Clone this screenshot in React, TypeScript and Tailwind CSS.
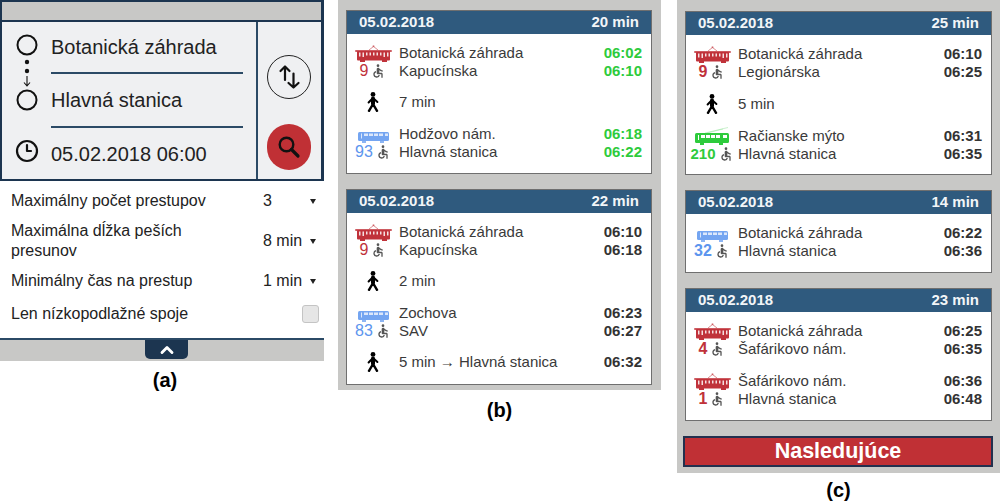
import React from 'react';
import { ChevronUp, Clock3 } from 'lucide-react';
import { MdAccessible } from 'react-icons/md';

type Vehicle = 'tram' | 'bus' | 'trolley';

const TramIcon = () => (
  <svg width="37" height="17" viewBox="0 0 37 17" fill="#c0323a">
    <path d="M14 5 L18.5 1.5 L23 5" fill="none" stroke="#c0323a" strokeWidth="0.8" opacity="0.7" />
    <circle cx="18.5" cy="1.2" r="1" opacity="0.6" />
    <rect x="0" y="5" width="37" height="2" rx="1" opacity="0.8" />
    <rect x="2" y="6" width="33" height="9.5" rx="1" />
    <g fill="#ffffff" opacity="0.85">
      <rect x="4" y="7.5" width="1.5" height="4" />
      <rect x="7.5" y="7.5" width="1.5" height="4.5" />
      <rect x="11" y="7.5" width="1.5" height="3" />
      <rect x="14.5" y="7.5" width="1.5" height="3" />
      <rect x="18" y="7.5" width="1.5" height="3" />
      <rect x="21.5" y="7.5" width="1.5" height="3" />
      <rect x="25" y="7.5" width="1.5" height="3" />
      <rect x="28.5" y="7.5" width="1.5" height="4.5" />
      <rect x="32" y="7.5" width="1.5" height="4" />
    </g>
    <rect x="5" y="15" width="5" height="2" />
    <rect x="27" y="15" width="5" height="2" />
  </svg>
);

const BusIcon = () => (
  <svg width="31" height="12" viewBox="0 0 31 12" fill="#5c95ee">
    <rect x="0" y="1" width="31" height="9" rx="1.5" opacity="0.85" />
    <g fill="#dbe7fb">
      <rect x="3" y="2.5" width="1" height="5" />
      <rect x="6" y="2.5" width="4" height="2.5" />
      <rect x="11" y="2.5" width="4" height="2.5" />
      <rect x="16" y="2.5" width="4" height="2.5" />
      <rect x="21" y="2.5" width="4" height="2.5" />
      <rect x="27" y="2.5" width="3" height="2.5" />
    </g>
    <rect x="4" y="10" width="4" height="2" opacity="0.7" />
    <rect x="22" y="10" width="4" height="2" opacity="0.7" />
  </svg>
);

const TrolleyIcon = () => (
  <svg width="34" height="18" viewBox="0 0 34 18" fill="#2ecb3c">
    <path d="M10 6 L33 0.5 M12 6 L28 2" stroke="#2ecb3c" strokeWidth="0.5" opacity="0.5" />
    <rect x="0" y="6" width="34" height="10" rx="1.5" />
    <g fill="#ffffff">
      <rect x="3" y="8" width="1" height="5" />
      <rect x="6" y="8" width="4" height="3" />
      <rect x="11" y="8" width="4" height="3" />
      <rect x="16" y="8" width="4" height="3" />
      <rect x="21" y="8" width="4" height="3" />
      <rect x="28" y="8" width="4" height="3" />
    </g>
    <rect x="5" y="16" width="4" height="2" />
    <rect x="24" y="16" width="4" height="2" />
  </svg>
);

const WalkIcon = () => (
  <svg width="12" height="20" viewBox="0 0 12 20" fill="none" stroke="#000" strokeLinecap="round">
    <circle cx="6" cy="2.4" r="2.4" fill="#000" stroke="none" />
    <path d="M6 6.5 V11.5" strokeWidth="4" />
    <path d="M6 6 L1.6 10.5 M6 6 L10.4 10" strokeWidth="2" />
    <path d="M6 12 L2 18.8 M6 12 L10 18.8" strokeWidth="2.4" />
  </svg>
);

const vehicleColor: Record<Vehicle, string> = {
  tram: 'text-[16px] text-[#c0323a]',
  bus: 'text-[16px] text-[#5c95ee]',
  trolley: 'text-[15px] text-[#2ecb3c] font-bold',
};

const Leg = ({ vehicle, line, stops, times, green, boldLine }: { vehicle: Vehicle; line: string; stops: [string, string]; times: [string, string]; green?: boolean; boldLine?: boolean }) => (
  <div className="flex h-[35px]">
    <div className="w-[52px] shrink-0 flex flex-col items-center">
      <div className="h-[18px] flex items-end justify-center">
        {vehicle === 'tram' && <TramIcon />}
        {vehicle === 'bus' && <BusIcon />}
        {vehicle === 'trolley' && <TrolleyIcon />}
      </div>
      <div className="h-[17px] flex items-center gap-[2px]">
        <span className={`leading-[17px] ${vehicleColor[vehicle]} ${boldLine ? 'font-bold' : ''}`}>{line}</span>
        <MdAccessible size={16} className="text-[#555]" />
      </div>
    </div>
    <div className="flex-1 text-[15px] leading-[17.5px] text-[#3a3a3a]">
      {stops.map((stop, i) => (
        <div key={i} className="flex justify-between">
          <span>{stop}</span>
          <span className={green ? 'font-bold text-[#2ecb3c]' : 'font-bold text-[#333]'}>{times[i]}</span>
        </div>
      ))}
    </div>
  </div>
);

const Walk = ({ text, time }: { text: string; time?: string }) => (
  <div className="flex h-[18px] items-center">
    <div className="w-[52px] shrink-0 flex justify-center">
      <WalkIcon />
    </div>
    <div className="flex-1 flex justify-between text-[15px] leading-[18px] text-[#3a3a3a]">
      <span>{text}</span>
      {time && <span className="font-bold text-[#333]">{time}</span>}
    </div>
  </div>
);

const Card = ({ minutes, bodyClass = 'gap-[14px] pb-[13px]', children }: { minutes: string; bodyClass?: string; children: React.ReactNode }) => (
  <div className="border border-[#6f6f6f] bg-white">
    <div className="h-[23px] bg-[#2f5a7e] flex items-center justify-between px-[12px] text-[15px] font-bold text-[#f2f5f8]">
      <span>05.02.2018</span>
      <span>{minutes}</span>
    </div>
    <div className={`flex flex-col pt-[10px] pr-[9px] ${bodyClass}`}>{children}</div>
  </div>
);

const Caption = ({ children }: { children: string }) => (
  <div className="text-center text-[20px] font-bold leading-[23px] text-black">{children}</div>
);

const Select = ({ value }: { value: string }) => (
  <div className="w-[53px] mr-[3px] shrink-0 flex items-center justify-between text-[16px] text-[#222]">
    <span>{value}</span>
    <span className="w-0 h-0 border-x-[3px] border-x-transparent border-t-[5px] border-t-[#222]" />
  </div>
);

const Planner = () => (
  <div className="w-[324px] mr-[14px] shrink-0">
    <div className="border-r-[3px] border-l-[2px] border-[#1c3550]">
      <div className="h-[18px] bg-[#c8c8c6] border-y-2 border-[#1c3550] box-content -mb-[2px]" />
      <div className="relative flex h-[161px] bg-[#eff0f2] border-y-2 border-[#1c3550] text-[20px] text-[#222]">
        <svg className="absolute left-[14px] top-[9px]" width="24" height="90" viewBox="0 0 24 90" fill="none" stroke="#111" strokeWidth="2">
          <circle cx="11" cy="14" r="9.5" />
          <circle cx="11" cy="31" r="2.2" fill="#111" stroke="none" />
          <circle cx="11" cy="40" r="2.2" fill="#111" stroke="none" />
          <path d="M11 45 V55 M8 51.5 L11 55 L14 51.5" strokeWidth="1.1" />
          <circle cx="11" cy="69" r="9.5" />
        </svg>
        <div className="w-[256px] pl-[49px] pr-[13px] border-r-2 border-[#2b4a66] flex flex-col">
          <div className="h-[52px] flex items-center border-b-2 border-[#2b4a66]">Botanická záhrada</div>
          <div className="h-[54px] flex items-center border-b-2 border-[#2b4a66]">Hlavná stanica</div>
          <div className="relative flex-1 flex items-center">
            <Clock3 size={24} strokeWidth={2.2} className="absolute -left-[36px] top-[11px] text-[#111]" />
            05.02.2018 06:00
          </div>
        </div>
        <div className="flex-1 flex flex-col items-center pt-[33px] pr-[2px] gap-[25px]">
          <div className="w-[44px] h-[44px] rounded-full border border-[#222] flex items-center justify-center">
            <svg width="26" height="26" viewBox="0 0 26 26" fill="none" stroke="#111" strokeWidth="2.2" strokeLinecap="round" strokeLinejoin="round">
              <path d="M9 16 V2.5 M4.5 7 L9 2.5 L13.5 7" />
              <path d="M17.5 9.5 V23.5 M12.5 19 L17.5 23.5 L22.5 19" />
            </svg>
          </div>
          <div className="w-[44px] h-[46px] rounded-full bg-[#c03035] flex items-center justify-center">
            <svg width="24" height="24" viewBox="0 0 24 24" fill="none" stroke="#111" strokeLinecap="round">
              <circle cx="9.5" cy="9.5" r="6.8" strokeWidth="2.4" />
              <path d="M14.5 14.5 L21 21" strokeWidth="3.2" />
            </svg>
          </div>
        </div>
      </div>
    </div>
    <div className="h-[157px] pl-[11px] pr-[5px] pt-[10px] text-[16px] leading-[20px] text-[#222] flex flex-col">
      <div className="flex items-center justify-between h-[20px]">
        <span>Maximálny počet prestupov</span>
        <Select value="3" />
      </div>
      <div className="flex items-center justify-between h-[40px] mt-[10px]">
        <span className="w-[220px]">Maximálna dĺžka peších presunov</span>
        <Select value="8 min" />
      </div>
      <div className="flex items-center justify-between h-[20px] mt-[10px]">
        <span>Minimálny čas na prestup</span>
        <Select value="1 min" />
      </div>
      <div className="flex items-center justify-between h-[20px] mt-[13px]">
        <span>Len nízkopodlažné spoje</span>
        <span className="w-[17px] h-[18px] rounded-[3px] bg-[#e6e6e6] border border-[#c4c4c4]" />
      </div>
    </div>
    <div className="h-[23px] bg-[#c8c8c6] border-t-2 border-[#2b4a66] pl-[145px]">
      <div className="w-[43px] h-[19px] bg-[#1c3550] rounded-b-[5px] flex items-center justify-center">
        <ChevronUp size={20} strokeWidth={3.4} className="text-white" />
      </div>
    </div>
    <div className="mt-[8px] pl-[6px]">
      <Caption>(a)</Caption>
    </div>
  </div>
);

export default function App() {
  return (
    <div className="w-[1000px] h-[502px] overflow-hidden bg-white flex items-start font-['Liberation_Sans',sans-serif]">
      <Planner />

      <div className="w-[323px] mr-[16px] shrink-0">
        <div className="bg-[#c8c8c6] pt-[10px] pb-[5px] pl-[8px] pr-[9px] flex flex-col gap-[15px]">
          <Card minutes="20 min">
            <Leg vehicle="tram" line="9" stops={['Botanická záhrada', 'Kapucínska']} times={['06:02', '06:10']} green />
            <Walk text="7 min" />
            <Leg vehicle="bus" line="93" stops={['Hodžovo nám.', 'Hlavná stanica']} times={['06:18', '06:22']} green />
          </Card>
          <Card minutes="22 min">
            <Leg vehicle="tram" line="9" stops={['Botanická záhrada', 'Kapucínska']} times={['06:10', '06:18']} />
            <Walk text="2 min" />
            <Leg vehicle="bus" line="83" stops={['Zochova', 'SAV']} times={['06:23', '06:27']} />
            <Walk text="5 min → Hlavná stanica" time="06:32" />
          </Card>
        </div>
        <div className="mt-[9px]">
          <Caption>(b)</Caption>
        </div>
      </div>

      <div className="w-[323px] shrink-0">
        <div className="bg-[#c8c8c6] pt-[11px] pb-[6px] pl-[6px] pr-[7px] flex flex-col gap-[15px]">
          <div className="pl-[2px] pr-px flex flex-col gap-[15px]">
            <Card minutes="25 min" bodyClass="gap-[14.5px] pb-[12px]">
              <Leg vehicle="tram" line="9" stops={['Botanická záhrada', 'Legionárska']} times={['06:10', '06:25']} boldLine />
              <Walk text="5 min" />
              <Leg vehicle="trolley" line="210" stops={['Račianske mýto', 'Hlavná stanica']} times={['06:31', '06:35']} />
            </Card>
            <Card minutes="14 min">
              <Leg vehicle="bus" line="32" stops={['Botanická záhrada', 'Hlavná stanica']} times={['06:22', '06:36']} boldLine />
            </Card>
            <Card minutes="23 min" bodyClass="gap-[15px] pb-[13px]">
              <Leg vehicle="tram" line="4" stops={['Botanická záhrada', 'Šafárikovo nám.']} times={['06:25', '06:35']} boldLine />
              <Leg vehicle="tram" line="1" stops={['Šafárikovo nám.', 'Hlavná stanica']} times={['06:36', '06:48']} boldLine />
            </Card>
          </div>
          <div className="h-[31px] bg-[#c03035] border-2 border-[#23304e] flex items-center justify-center text-[21.5px] font-bold text-white">
            Nasledujúce
          </div>
        </div>
        <div className="mt-[6px]">
          <Caption>(c)</Caption>
        </div>
      </div>
    </div>
  );
}
